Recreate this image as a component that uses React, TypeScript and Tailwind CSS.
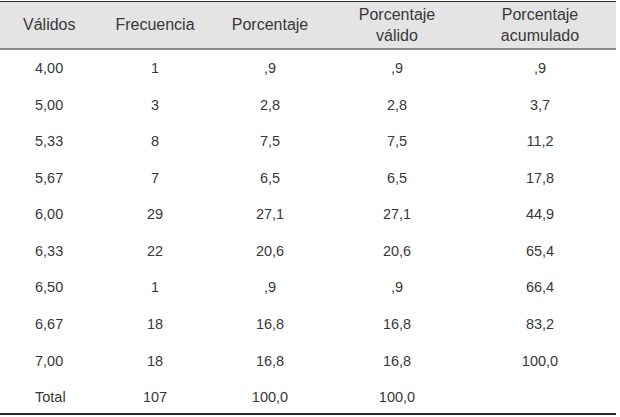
import React from 'react';

const rows = [
  ['4,00', '1', ',9', ',9', ',9'],
  ['5,00', '3', '2,8', '2,8', '3,7'],
  ['5,33', '8', '7,5', '7,5', '11,2'],
  ['5,67', '7', '6,5', '6,5', '17,8'],
  ['6,00', '29', '27,1', '27,1', '44,9'],
  ['6,33', '22', '20,6', '20,6', '65,4'],
  ['6,50', '1', ',9', ',9', '66,4'],
  ['6,67', '18', '16,8', '16,8', '83,2'],
  ['7,00', '18', '16,8', '16,8', '100,0'],
  ['Total', '107', '100,0', '100,0', ''],
];

function App() {
  return (
    <div className="bg-white w-[620px] h-[417px] pt-[1px] font-['Liberation_Sans',Arial,sans-serif] text-[#383838]">
      <table className="w-[616px] border-collapse table-fixed">
        <colgroup>
          <col className="w-[100px]" />
          <col className="w-[110px]" />
          <col className="w-[120px]" />
          <col className="w-[134px]" />
          <col className="w-[152px]" />
        </colgroup>
        <thead>
          <tr className="bg-[#e4e4e4] border-t border-t-[#2a2a2a] border-b-2 border-b-[#8c8c8c] text-[16px] leading-[21px] h-[47px]">
            <th className="font-normal text-left pl-[23px]">Válidos</th>
            <th className="font-normal text-center">Frecuencia</th>
            <th className="font-normal text-center">Porcentaje</th>
            <th className="font-normal text-center">
              Porcentaje
              <br />
              válido
            </th>
            <th className="font-normal text-center">
              Porcentaje
              <br />
              acumulado
            </th>
          </tr>
        </thead>
        <tbody className="text-[14.5px]">
          {rows.map((r, i) => (
            <tr
              key={i}
              className={
                i === rows.length - 1
                  ? 'h-[36.6px] border-b-2 border-b-[#2a2a2a]'
                  : 'h-[36.6px]'
              }
            >
              <td className="pl-[35px] text-left pt-[4px]">{r[0]}</td>
              <td className="text-center pt-[4px]">{r[1]}</td>
              <td className="text-center pt-[4px]">{r[2]}</td>
              <td className="text-center pt-[4px]">{r[3]}</td>
              <td className="text-center pt-[4px]">{r[4]}</td>
            </tr>
          ))}
        </tbody>
      </table>
    </div>
  );
}

export default App;
